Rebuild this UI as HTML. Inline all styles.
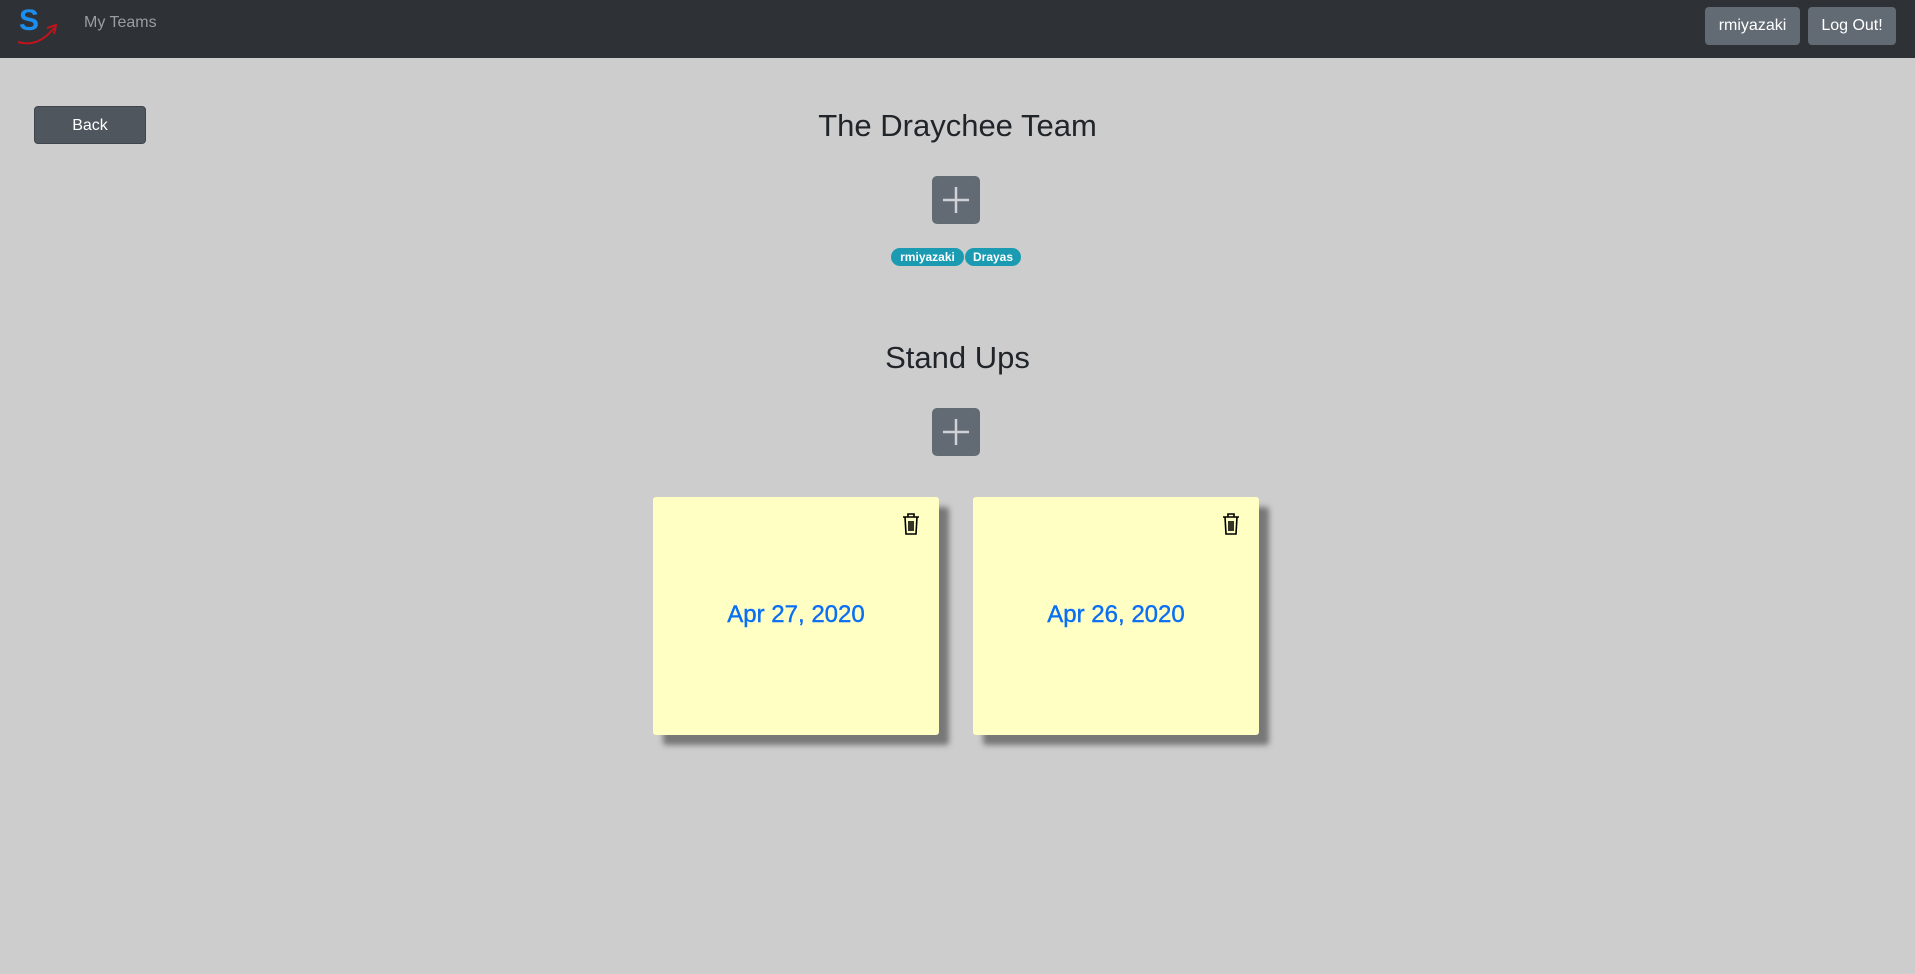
<!DOCTYPE html>
<html><head><style>
*{box-sizing:border-box;margin:0;padding:0}
body{width:1915px;height:974px;background:#cdcdcd;font-family:"Liberation Sans",sans-serif;position:relative;overflow:hidden}
.nav{position:absolute;left:0;top:0;width:1915px;height:58px;background:#2e3236}
.abs{position:absolute}
.btn{position:absolute;background:#626a73;color:#fff;border-radius:4px;font-size:16px;display:flex;align-items:center;justify-content:center}
.h{position:absolute;left:0;width:1915px;text-align:center;color:#212529;font-size:31px;line-height:40px}
.plus{position:absolute;left:932px;width:48px;height:48px;background:#626a73;border-radius:5px}
.badge{position:absolute;top:248px;height:18px;background:#1a9bb2;color:#fff;font-weight:bold;font-size:12px;border-radius:9px;display:flex;align-items:center;justify-content:center}
.card{position:absolute;top:497px;width:286px;height:238px;background:#ffffc4;border-radius:3px;box-shadow:10px 10px 6px #777}
.date{position:absolute;left:0;right:0;top:104px;text-align:center;color:#0a6ff5;font-size:24px;-webkit-text-stroke:0.4px #0a6ff5}
.trash{position:absolute;right:18px;top:15px}
</style></head><body>
<div class="nav">
 <div class="abs" style="left:19px;top:4px;color:#1c8ef0;font-weight:bold;font-size:30px;line-height:34px">S</div>
 <svg class="abs" style="left:16px;top:20px" width="44" height="26"><path d="M2 22 Q22 28 38 8" stroke="#c0141c" stroke-width="2" fill="none"/><path d="M31 8 L40 5 L38 14" stroke="#c0141c" stroke-width="2" fill="none"/></svg>
 <div class="abs" style="left:84px;top:14px;color:#9a9da0;font-size:16px">My Teams</div>
 <div class="btn" style="left:1705px;top:7px;width:95px;height:38px">rmiyazaki</div>
 <div class="btn" style="left:1808px;top:7px;width:88px;height:38px">Log Out!</div>
</div>
<div class="btn" style="left:34px;top:106px;width:112px;height:38px;background:#4f565e;border:1px solid #3f454b;padding-top:2px">Back</div>
<div class="h" style="top:106px">The Draychee Team</div>
<div class="plus" style="top:176px"><svg width="48" height="48"><path d="M24 11V37M11 24H37" stroke="#cfd2d6" stroke-width="2.5"/></svg></div>
<div class="badge" style="left:891px;width:73px">rmiyazaki</div>
<div class="badge" style="left:965px;width:56px">Drayas</div>
<div class="h" style="top:338px">Stand Ups</div>
<div class="plus" style="top:408px"><svg width="48" height="48"><path d="M24 11V37M11 24H37" stroke="#cfd2d6" stroke-width="2.5"/></svg></div>
<div class="card" style="left:653px"><svg class="trash" width="20" height="24" viewBox="0 0 20 24"><path d="M2 5H18M7 5V2H13V5M4 5L5 22H15L16 5M8 9V19M10 9V19M12 9V19" stroke="#000" stroke-width="1.6" fill="none"/></svg><div class="date">Apr 27, 2020</div></div>
<div class="card" style="left:973px"><svg class="trash" width="20" height="24" viewBox="0 0 20 24"><path d="M2 5H18M7 5V2H13V5M4 5L5 22H15L16 5M8 9V19M10 9V19M12 9V19" stroke="#000" stroke-width="1.6" fill="none"/></svg><div class="date">Apr 26, 2020</div></div>
</body></html>
